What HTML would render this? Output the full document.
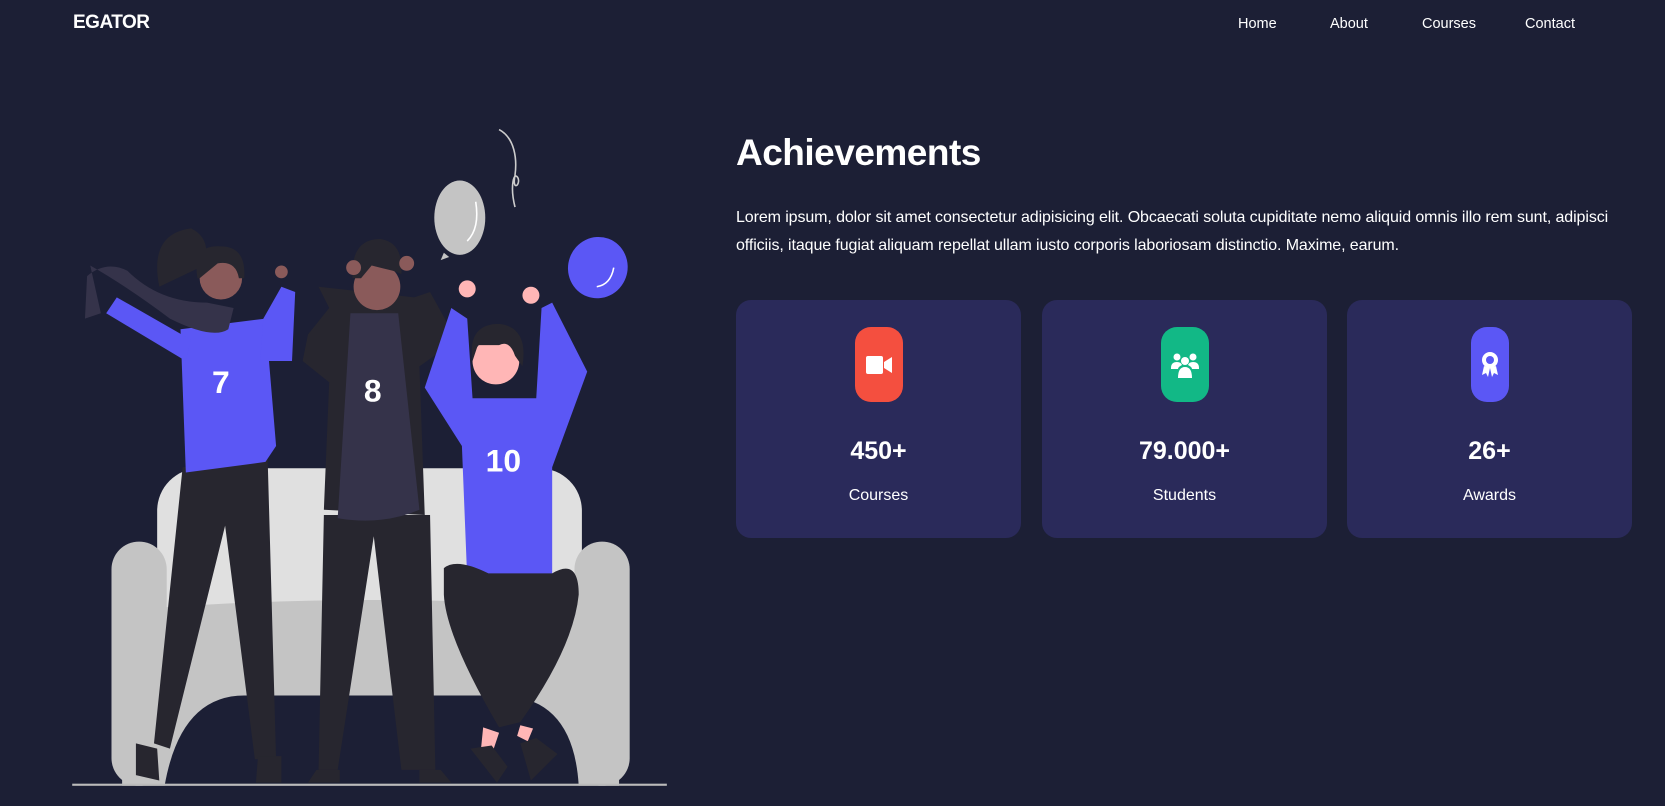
<!DOCTYPE html>
<html><head><meta charset="utf-8"><style>
*{margin:0;padding:0;box-sizing:border-box}
body{width:1665px;height:806px;overflow:hidden;background:#1c1f35;font-family:"Liberation Sans",sans-serif;color:#fff;position:relative}
.logo{position:absolute;left:73px;top:12px;font-size:19px;font-weight:bold;letter-spacing:-0.5px}
.nav a{position:absolute;top:16px;font-size:14.5px;color:#fff;text-decoration:none}
h1{position:absolute;left:736px;top:132px;font-size:37px;font-weight:bold;letter-spacing:-0.5px}
p.t{position:absolute;left:736px;top:204px;width:880px;font-size:16px;line-height:28px;letter-spacing:-0.1px}
.card{position:absolute;top:300px;width:285px;height:238px;background:#2a2a5a;border-radius:15px;text-align:center}
.ic{position:absolute;left:50%;top:27px;width:48px;height:75px;margin-left:-24px;border-radius:16px;display:flex;align-items:center;justify-content:center}
.num{position:absolute;top:137px;width:100%;font-size:25px;font-weight:bold}
.lab{position:absolute;top:187px;width:100%;font-size:16px}
svg.ill{position:absolute;left:0;top:0}
</style></head><body>
<svg class="ill" width="1665" height="806" viewBox="0 0 1568 759">
<path d="M470 122 C485 130 487 150 485 165 C482 180 490 175 488 168 C484 160 480 175 485 195" stroke="#ccc" stroke-width="1.5" fill="none"/>
<ellipse cx="433" cy="205" rx="24" ry="35" fill="#c4c4c4"/><path d="M418 238 l-3 7 l8 -3z" fill="#c4c4c4"/>
<path d="M448 190 Q452 215 440 227" stroke="#fff" stroke-width="1.5" fill="none"/>
<ellipse cx="563" cy="252" rx="28" ry="29" fill="#5b57f5" transform="rotate(20 563 252)"/>
<path d="M578 252 Q575 268 562 270" stroke="#fff" stroke-width="1.5" fill="none"/>
<rect x="148" y="441" width="400" height="200" rx="40" fill="#e0e0e0"/>
<path d="M115 575 Q350 555 583 575 L583 740 L115 740Z" fill="#c4c4c4"/>
<rect x="105" y="510" width="52" height="230" rx="26" fill="#c4c4c4"/>
<rect x="541" y="510" width="52" height="230" rx="26" fill="#c4c4c4"/>
<path d="M155 740 Q170 655 230 655 L470 655 Q540 655 545 740Z" fill="#1c1f35"/>
<rect x="68" y="738" width="560" height="2" fill="#bbb"/>
<path d="M172 440 L145 700 L160 705 L212 495 L240 715 L260 715 L252 430Z" fill="#27262f"/>
<path d="M128 700 l20 5 l2 30 l-22 -5z M243 712 h22 v25 h-24z" fill="#27262f"/>
<path d="M170 310 L250 300 L260 420 L250 435 L175 445Z" fill="#5b57f5"/>
<path d="M110 280 L180 320 L175 340 L100 295Z M248 300 L265 270 L278 275 L275 340 L245 340Z" fill="#5b57f5"/>
<path d="M85 250 Q120 270 160 300 Q200 320 215 310 L220 290 L195 285 Q150 285 120 255 Q100 245 82 260 L80 300 L95 295Z" fill="#35334a"/>
<circle cx="208" cy="262" r="20" fill="#8a5a5a"/>
<path d="M186 262 Q180 230 208 232 Q232 232 230 262 L225 262 Q222 245 205 248 L188 262Z M150 270 Q140 220 180 215 Q200 225 192 250Z" fill="#27262f"/>
<circle cx="265" cy="256" r="6" fill="#8a5a5a"/>
<text x="208" y="370" font-family="Liberation Sans" font-weight="bold" font-size="30" fill="#fff" text-anchor="middle">7</text>
<path d="M305 485 L300 725 L318 725 L352 505 L378 725 L410 725 L405 485Z" fill="#27262f"/>
<path d="M300 270 L310 290 L290 315 L285 340 L310 360 L305 480 L400 485 L395 345 L430 320 L405 275 L390 280Z" fill="#27262f"/>
<path d="M330 295 L375 295 L395 480 Q360 495 318 488Z" fill="#35334a"/>
<circle cx="355" cy="270" r="22" fill="#8a5a5a"/>
<path d="M332 262 Q330 225 358 225 Q380 228 378 258 L370 255 L350 250 L340 262Z" fill="#27262f"/>
<circle cx="333" cy="252" r="7" fill="#8a5a5a"/><circle cx="383" cy="248" r="7" fill="#8a5a5a"/>
<path d="M298 725 h22 v12 h-30z M395 725 h20 l10 12 h-30z" fill="#27262f"/>
<text x="351" y="378" font-family="Liberation Sans" font-weight="bold" font-size="30" fill="#fff" text-anchor="middle">8</text>
<path d="M400 365 L425 290 L440 300 L445 375 L460 375 L505 375 L510 290 L520 285 L553 350 L520 440 L520 545 L440 545 L435 420Z" fill="#5b57f5"/>
<circle cx="440" cy="272" r="8" fill="#ffb6b6"/><circle cx="500" cy="278" r="8" fill="#ffb6b6"/>
<circle cx="467" cy="340" r="22" fill="#ffb6b6"/>
<path d="M445 340 Q440 305 470 305 Q498 308 492 345 L485 335 Q480 320 470 325 L450 325Z" fill="#27262f"/>
<path d="M418 535 Q430 525 460 540 L520 540 Q545 525 545 560 Q540 610 490 680 L470 685 Q420 600 418 560Z" fill="#27262f"/>
<path d="M455 685 l15 5 l-5 15 h-12z M490 683 l12 3 l-5 12 l-10 -5z" fill="#ffb6b6"/>
<path d="M443 705 l20 -3 l15 20 l-10 15 z M490 700 l15 -5 l20 15 l-25 25z" fill="#27262f"/>
<text x="474" y="444" font-family="Liberation Sans" font-weight="bold" font-size="30" fill="#fff" text-anchor="middle">10</text>
</svg>
<div class="logo">EGATOR</div>
<div class="nav"><a style="left:1238px">Home</a><a style="left:1330px">About</a><a style="left:1422px">Courses</a><a style="left:1525px">Contact</a></div>
<h1>Achievements</h1>
<p class="t">Lorem ipsum, dolor sit amet consectetur adipisicing elit. Obcaecati soluta cupiditate nemo aliquid omnis illo rem sunt, adipisci officiis, itaque fugiat aliquam repellat ullam iusto corporis laboriosam distinctio. Maxime, earum.</p>
<div class="card" style="left:736px"><div class="ic" style="background:#f44f3f"><svg width="26" height="18" viewBox="0 0 26 18"><rect x="0" y="0" width="17" height="18" rx="2" fill="#fff"/><path d="M18 6 L26 1 V17 L18 12Z" fill="#fff"/></svg></div><div class="num">450+</div><div class="lab">Courses</div></div>
<div class="card" style="left:1042px"><div class="ic" style="background:#12b886"><svg width="30" height="26" viewBox="0 0 30 26"><circle cx="7" cy="5" r="3.5" fill="#fff"/><circle cx="23" cy="5" r="3.5" fill="#fff"/><circle cx="15" cy="9" r="4" fill="#fff"/><path d="M1 16 Q1 10 7 10 Q11 10 12 13 Q8 15 8 17 H1Z M29 16 Q29 10 23 10 Q19 10 18 13 Q22 15 22 17 H29Z M8 26 Q8 15 15 15 Q22 15 22 26Z" fill="#fff"/></svg></div><div class="num">79.000+</div><div class="lab">Students</div></div>
<div class="card" style="left:1347px"><div class="ic" style="background:#5b57f5;width:38px;margin-left:-19px"><svg width="18" height="28" viewBox="0 0 18 28"><circle cx="9" cy="9" r="8" fill="#fff"/><circle cx="9" cy="9" r="4" fill="#5b57f5"/><path d="M3 15 L1 24 L5 22 L7 26 L9 17Z M15 15 L17 24 L13 22 L11 26 L9 17Z" fill="#fff"/></svg></div><div class="num">26+</div><div class="lab">Awards</div></div>
</body></html>
